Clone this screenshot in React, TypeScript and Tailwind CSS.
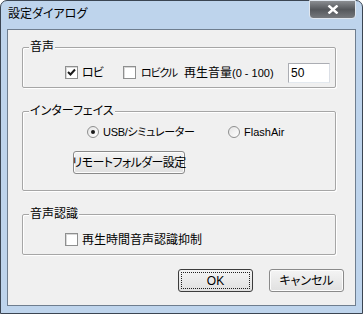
import React from "react";

const font = "font-['Liberation_Sans','Noto_Sans_CJK_JP',sans-serif] [font-feature-settings:'palt'] whitespace-nowrap";

const CheckBox = ({ checked = false }: { checked?: boolean }) => (
	<span className="box-border w-[13px] h-[13px] border border-[#8e8f8f] bg-white shadow-[inset_1px_1px_0_#d8d8d8] flex items-center justify-center shrink-0">
		{checked && (
			<svg width="9" height="9" viewBox="0 0 9 9">
				<path d="M1 4 L3.5 6.5 L8 1.5" stroke="#1a1a1a" strokeWidth="2" fill="none" />
			</svg>
		)}
	</span>
);

const Radio = ({ checked = false }: { checked?: boolean }) => (
	<span className="box-border w-[12px] h-[12px] rounded-full border border-[#8e8f8f] bg-gradient-to-br from-[#e4e4e4] to-white flex items-center justify-center shrink-0">
		{checked && <span className="w-[4px] h-[4px] rounded-full bg-[#1a1a1a]" />}
	</span>
);

const Group = ({
	label,
	className,
	children,
}: {
	label: string;
	className: string;
	children: React.ReactNode;
}) => (
	<div
		className={`relative box-border w-[314px] border border-[#a6a6a6] rounded-[2px] shadow-[inset_1px_1px_0_#fff,1px_1px_0_#fff] ${className}`}
	>
		<span className="absolute -top-[8px] left-[6px] px-[1px] bg-[#f0f0f0] text-[12px] leading-[14px]">
			{label}
		</span>
		{children}
	</div>
);

const Button = ({ label, isDefault = false }: { label: string; isDefault?: boolean }) => (
	<button
		className={`box-border w-[75px] h-[23px] rounded-[3px] border bg-gradient-to-b from-[#f4f4f4] to-[#e0e0e0] text-[12px] leading-[14px] flex items-center justify-center ${
			isDefault ? "border-[#3c3c3c] p-[2px]" : "border-[#8a8a8a] shadow-[inset_0_0_0_1px_#fcfcfc]"
		}`}
	>
		{isDefault ? (
			<span className="w-full h-full border border-dotted border-[#202020] flex items-center justify-center">
				{label}
			</span>
		) : (
			label
		)}
	</button>
);

export default function App() {
	return (
		<div className={`w-[363px] h-[314px] box-border bg-[#bed4ec] border border-[#3b4552] rounded-t-[7px] flex flex-col text-black ${font}`}>
			<div className="h-[28px] flex items-start justify-between">
				<span className="pl-[7px] pt-[6px] text-[12px] leading-[14px]">設定ダイアログ</span>
				<div className="-mt-px mr-[6px] w-[47px] h-[19px] box-border rounded-b-[4px] border border-[#dfe6ee] bg-gradient-to-b from-[#8a8d91] via-[#55585c] to-[#76797d] flex items-center justify-center">
					<svg width="12" height="9" viewBox="0 0 12 9">
						<path d="M1.5 0.5 L10.5 8.5 M10.5 0.5 L1.5 8.5" stroke="#fff" strokeWidth="2.4" />
					</svg>
				</div>
			</div>

			<div className="mx-[6px] h-[277px] box-border bg-[#f0f0f0] border border-[#6f7e8f] flex flex-col pl-[14px] pt-[17px] text-[12px] leading-[14px]">
				<Group label="音声" className="h-[41px] flex items-center pt-[10px] pl-[42px]">
					<div className="w-[58px] flex items-center gap-[4px]">
						<CheckBox checked />
						<span className="tracking-[-1px]">ロビ</span>
					</div>
					<div className="w-[61px] flex items-center gap-[5px]">
						<CheckBox />
						<span className="text-[11px] tracking-[-1.2px]">ロビクル</span>
					</div>
					<span className="w-[104px]">
						再生音量<span className="text-[11px]">(0 - 100)</span>
					</span>
					<div className="box-border w-[42px] h-[20px] bg-white border border-[#abadb3] border-r-[#dbdfe6] border-b-[#e3e9ef] flex items-center pl-[2px]">
						50
					</div>
				</Group>

				<Group label="インターフェイス" className="mt-[23px] h-[80px] flex flex-col pl-[64px]">
					<div className="mt-[14px] h-[12px] flex items-center">
						<div className="w-[141px] flex items-center gap-[4px]">
							<Radio checked />
							<span className="text-[11px] tracking-[-0.3px]">USB/シミュレーター</span>
						</div>
						<div className="flex items-center gap-[4px]">
							<Radio />
							<span className="text-[11px]">FlashAir</span>
						</div>
					</div>
					<button className="-ml-[14px] mt-[13px] box-border w-[112px] h-[23px] rounded-[3px] border border-[#8a8a8a] bg-gradient-to-b from-[#f4f4f4] to-[#e0e0e0] shadow-[inset_0_0_0_1px_#fcfcfc] flex items-center justify-center tracking-[-0.6px]">
						リモートフォルダー設定
					</button>
				</Group>

				<Group label="音声認識" className="mt-[23px] h-[41px] flex items-center pt-[10px] pl-[42px]">
					<div className="flex items-center gap-[4px]">
						<CheckBox />
						<span>再生時間音声認識抑制</span>
					</div>
				</Group>

				<div className="mt-[14px] flex justify-end gap-[16px] pr-[11px]">
					<Button label="OK" isDefault />
					<Button label="キャンセル" />
				</div>
			</div>
		</div>
	);
}
